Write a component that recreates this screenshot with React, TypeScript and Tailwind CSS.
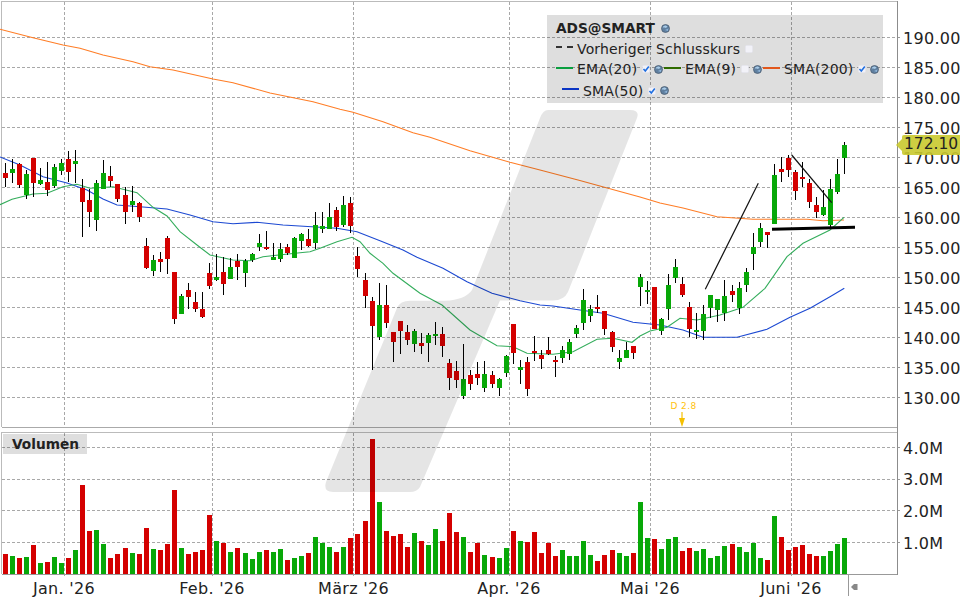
// ADS@SMART stock chart: candles, moving averages and volume
type Candle = [number, number, number, number, number, 'r' | 'g', number];

// coords read off the chart: x, wick top, wick bottom, body top, body bottom, colour, volume top (all 3x, per crop)
const partA: Candle[] = [
  [16, 128, 200, 158, 173, 'r', 387], [37, 117, 188, 146, 158, 'g', 393], [58, 128, 203, 131, 194, 'r', 399],
  [79, 150, 236, 162, 224, 'g', 396], [100, 113, 230, 113, 188, 'r', 360], [121, 143, 194, 180, 191, 'g', 414],
  [142, 126, 227, 186, 209, 'r', 411], [163, 131, 203, 141, 197, 'g', 396], [184, 117, 164, 129, 152, 'g', 414],
  [205, 93, 185, 117, 155, 'r', 399], [226, 90, 188, 123, 131, 'g', 375], [247, 177, 350, 204, 245, 'r', 180],
  [268, 207, 320, 240, 275, 'r', 318], [289, 180, 332, 189, 299, 'g', 315], [310, 120, 207, 159, 207, 'g', 357],
  [331, 138, 200, 168, 182, 'r', 399], [352, 192, 245, 192, 236, 'r', 387], [376, 200, 311, 225, 275, 'r', 369],
  [397, 198, 275, 243, 255, 'g', 384], [418, 245, 305, 249, 290, 'r', 387], [439, 353, 446, 378, 443, 'r', 309],
  [460, 405, 467, 420, 452, 'g', 372], [481, 396, 455, 417, 426, 'r', 375], [502, 349, 461, 353, 416, 'r', 357],
  [523, 456, 611, 456, 596, 'r', 195], [544, 522, 581, 528, 581, 'g', 369], [565, 489, 566, 510, 530, 'r', 387],
  [586, 516, 575, 546, 566, 'r', 381], [607, 516, 593, 567, 590, 'r', 375], [628, 429, 506, 459, 498, 'r', 270],
  [649, 402, 482, 471, 480, 'g', 348], [670, 411, 524, 456, 491, 'r', 354], [691, 414, 476, 441, 476, 'g', 381],
  [712, 402, 479, 423, 441, 'r', 369], [736, 417, 500, 423, 458, 'g', 384], [757, 399, 426, 402, 420, 'g', 402],
  [778, 342, 393, 369, 381, 'g', 381], [799, 333, 389, 381, 387, 'r', 375], [820, 369, 420, 411, 420, 'g', 381],
  [841, 369, 426, 387, 417, 'g', 372], [862, 372, 405, 381, 399, 'r', 405], [883, 351, 414, 354, 414, 'g', 399],
  [904, 339, 390, 342, 363, 'g', 393], [925, 327, 381, 357, 378, 'r', 384], [946, 276, 387, 315, 369, 'g', 336],
];

const partB: Candle[] = [
  [7, 96, 158, 138, 147, 'g', 354], [28, 69, 147, 111, 147, 'g', 366], [49, 82, 152, 90, 140, 'r', 381],
  [70, 48, 140, 75, 135, 'g', 366], [91, 51, 158, 69, 137, 'r', 339], [112, 201, 290, 228, 266, 'r', 327],
  [136, 279, 383, 300, 347, 'r', 288], [157, 351, 569, 363, 437, 'r', 42], [178, 309, 479, 375, 470, 'g', 231],
  [199, 315, 443, 375, 428, 'r', 318], [220, 456, 545, 456, 485, 'r', 333], [241, 423, 521, 423, 452, 'r', 327],
  [262, 435, 494, 456, 479, 'r', 366], [283, 447, 515, 453, 491, 'g', 324], [304, 459, 521, 489, 497, 'r', 348],
  [325, 459, 545, 465, 488, 'g', 360], [346, 426, 494, 462, 467, 'g', 312], [367, 441, 530, 462, 497, 'r', 348],
  [388, 537, 629, 549, 593, 'r', 264], [409, 543, 623, 573, 599, 'r', 321], [430, 491, 656, 597, 647, 'g', 336],
  [451, 570, 629, 585, 611, 'r', 381], [472, 545, 614, 582, 593, 'r', 354], [493, 543, 635, 582, 623, 'g', 390],
  [517, 573, 623, 585, 611, 'r', 396], [538, 594, 647, 597, 623, 'g', 399], [559, 524, 590, 528, 578, 'g', 369],
  [580, 432, 551, 432, 518, 'r', 318], [601, 540, 611, 561, 570, 'g', 348], [622, 530, 647, 546, 626, 'r', 351],
  [643, 468, 542, 513, 519, 'r', 321], [664, 510, 566, 525, 536, 'r', 384], [685, 471, 524, 510, 521, 'r', 354],
  [706, 528, 590, 540, 545, 'r', 393], [727, 498, 548, 510, 533, 'g', 375], [748, 477, 539, 486, 521, 'g', 393],
  [769, 435, 474, 444, 462, 'g', 393], [790, 327, 449, 360, 428, 'g', 348], [811, 375, 425, 387, 407, 'g', 390],
  [832, 345, 399, 381, 387, 'r', 408], [853, 393, 465, 393, 446, 'r', 390], [877, 453, 515, 456, 500, 'r', 375],
  [898, 510, 568, 534, 545, 'g', 384], [919, 485, 533, 510, 533, 'g', 393], [940, 498, 536, 498, 518, 'r', 384],
];

const partC: Candle[] = [
  [1, 462, 557, 471, 500, 'g', 231], [22, 483, 552, 510, 515, 'g', 339], [43, 501, 628, 501, 626, 'r', 342],
  [64, 594, 644, 597, 632, 'g', 372], [85, 462, 600, 495, 567, 'g', 342], [106, 417, 489, 441, 473, 'g', 336],
  [127, 471, 530, 492, 524, 'r', 378], [148, 546, 650, 561, 626, 'r', 369], [169, 579, 656, 630, 635, 'g', 378],
  [190, 555, 660, 582, 632, 'g', 372], [211, 525, 594, 525, 564, 'g', 399], [232, 537, 605, 537, 570, 'g', 393],
  [253, 480, 603, 528, 579, 'g', 363], [277, 495, 546, 513, 525, 'r', 357], [298, 486, 582, 504, 564, 'g', 366],
  [319, 444, 516, 456, 495, 'g', 381], [340, 339, 450, 381, 402, 'g', 354], [361, 309, 381, 324, 366, 'g', 399],
  [382, 336, 384, 336, 345, 'r', 405], [403, 132, 312, 165, 312, 'g', 273], [424, 111, 186, 147, 156, 'r', 336],
  [445, 105, 171, 114, 150, 'r', 375], [466, 150, 240, 156, 213, 'r', 366], [487, 126, 201, 171, 177, 'r', 360],
  [508, 177, 264, 189, 246, 'r', 387], [529, 231, 294, 255, 276, 'r', 393], [550, 210, 288, 261, 285, 'g', 393],
  [571, 177, 321, 207, 315, 'g', 378], [592, 117, 222, 162, 216, 'g', 357], [613, 66, 162, 75, 114, 'g', 339],
];

const candles = [
  ...partA.map((c) => ({ c, ox: 0, oy: 120 })),
  ...partB.map((c) => ({ c, ox: 320, oy: 180 })),
  ...partC.map((c) => ({ c, ox: 640, oy: 120 })),
].map(({ c, ox, oy }) => ({
  x: Math.floor(ox + c[0] / 3),
  wickTop: Math.round(oy + c[1] / 3),
  wickBot: Math.round(oy + c[2] / 3),
  bodyTop: Math.round(oy + c[3] / 3),
  bodyBot: Math.round(oy + c[4] / 3),
  fill: c[5] === 'r' ? '#d40000' : '#08a808',
  volTop: Math.round(425 + c[6] / 3),
}));

const sma200 = '0,29.3 33,37.7 63,45 80,48.3 103,55 133,61.7 150,66.7 173,70 213,79 233,82.7 270,93 313,101.7 340,109.3 353,112.3 383,121.7 413,132.7 430,137.3 470,150.7 510,162.3 540,170 578,180 640,197 660,203 683,208 717,216.7 753,219.3 807,219.3 823,220.7 844,220';
const sma50 = '0,157 20,165 43,176.7 67,183 87,190 103,199 117,205 140,206.7 167,209 190,215 213,221.7 233,223.7 257,222.3 283,225 320,227.3 337,228.3 357,231.7 380,240.7 403,250 417,257.3 443,268.3 467,281.7 492,293.3 520,300.7 540,305 553,306 580,310 603,313.3 633,322.3 660,325 683,330 703,337.3 737,337.3 767,329.3 790,317.3 810,308.3 830,296.7 844.3,288.3';
const ema20 = '0,204.7 12,199.3 33,194 47,193.3 63,186.7 77,184.3 90,188.3 113,186.7 137,192.7 153,207.3 167,216 180,231.7 197,245 210,255 233,260 250,260.7 263,256.7 300,252.7 310,251.7 320,248.3 337,241.7 352,237.3 360,241.7 370,253.3 383,263.3 393,273.3 420,293.3 442,305 470,330 497,345.7 513,346.7 527,353.3 553,354.3 573,351.7 597,339.3 613,338.3 632,342.3 640,336 650,331 667,327.3 680,318.3 697,320 720,315 743,307.3 765,288.3 787,256.7 803,243.3 830,230 844,217.3';

const priceRows = [37, 67, 97, 127, 157, 187, 217, 247, 277, 307, 337, 367, 397];
const volRows = [447, 479, 510, 542];
const months = [64, 212, 353, 509, 650, 791];
const prices = ['190.00', '185.00', '180.00', '175.00', '170.00', '165.00', '160.00', '155.00', '150.00', '145.00', '140.00', '135.00', '130.00'];

const Globe = () => (
  <svg width="9" height="9" viewBox="0 0 9 9" className="shrink-0">
    <circle cx="4.5" cy="4.5" r="4" fill="#5f7f9f" />
    <path d="M1.5 3.5 C3 1 5 1 6.5 2.5 L5 4 L3.5 3.5 Z" fill="#a9cbe8" />
    <path d="M4 6 L7.5 4.5 L7 7 Z" fill="#8fb6dc" />
    <circle cx="4.5" cy="4.5" r="4" fill="none" stroke="#46586c" strokeWidth="0.7" />
  </svg>
);

const CheckBox = ({ checked }: { checked: boolean }) => (
  <svg width="8" height="8" viewBox="0 0 8 8" className="shrink-0">
    <rect x="0.5" y="0.5" width="7" height="7" rx="1" fill="#f2f2f8" stroke="#e4e4ee" strokeWidth="0.6" />
    {checked && <path d="M1.5 4 L3.3 6 L6.8 1.6" fill="none" stroke="#1f6fe0" strokeWidth="1.6" />}
  </svg>
);

const LegendItem = ({ label, line, checked, width }: { label: string; line: string; checked: boolean; width: string }) => (
  <div className={`flex items-center ${width}`}>
    <span className={`block w-[17px] h-[2px] mb-[3px] shrink-0 ${line}`} />
    <span className="ml-[4px] whitespace-nowrap">{label}</span>
    <span className="ml-[5px] flex"><CheckBox checked={checked} /></span>
    <span className="ml-[4px] flex"><Globe /></span>
  </div>
);

const Chart = () => (
  <svg width="900" height="578" viewBox="0 0 900 578" className="block">
    {/* grid */}
    <g stroke="#a8a8a8" strokeWidth="1" strokeDasharray="3 2" shapeRendering="crispEdges">
      {priceRows.concat(volRows).map((y) => <line key={y} x1="2" x2="897" y1={y + 0.5} y2={y + 0.5} />)}
      {months.map((x) => <line key={x} x1={x + 0.5} x2={x + 0.5} y1="2" y2="427" />)}
      {months.map((x) => <line key={x} x1={x + 0.5} x2={x + 0.5} y1="433" y2="578" />)}
    </g>
    <g stroke="#999" strokeWidth="1" shapeRendering="crispEdges">
      {priceRows.concat(volRows).map((y) => <line key={y} x1="897" x2="900" y1={y + 0.5} y2={y + 0.5} />)}
      <line x1="848.5" x2="848.5" y1="574" y2="578" />
    </g>
    {/* panel frames */}
    <g fill="none" shapeRendering="crispEdges">
      <path d="M1.5 427 V1.5 H897" stroke="#bbb" />
      <path d="M1.5 574 V432.5 H897" stroke="#bbb" />
      <path d="M1.5 427.5 H897" stroke="#aaa" />
      <path d="M1.5 574.5 H897.5" stroke="#999" />
      <path d="M897.5 1 V575" stroke="#8c8c8c" />
    </g>
    {/* volume */}
    <g shapeRendering="crispEdges">
      {candles.map((k) => <rect key={k.x} x={k.x - 2} y={k.volTop} width="5" height={574 - k.volTop} fill={k.fill} />)}
    </g>
    {/* moving averages */}
    <polyline points={sma200} fill="none" stroke="#ff7d26" strokeWidth="1.1" />
    <polyline points={sma50} fill="none" stroke="#1c49d2" strokeWidth="1.1" />
    <polyline points={ema20} fill="none" stroke="#34ad5c" strokeWidth="1.1" />
    {/* candles */}
    <g shapeRendering="crispEdges">
      {candles.map((k) => (
        <g key={k.x}>
          <rect x={k.x} y={k.wickTop} width="1" height={k.wickBot - k.wickTop} fill="#000" />
          <rect x={k.x - 2} y={k.bodyTop} width="5" height={Math.max(k.bodyBot - k.bodyTop, 2)} fill={k.fill} />
        </g>
      ))}
    </g>
    {/* drawn trend lines */}
    <line x1="705.3" y1="289.3" x2="758.3" y2="183.3" stroke="#111" strokeWidth="1.2" />
    <line x1="791.7" y1="155" x2="831.7" y2="202.7" stroke="#111" strokeWidth="1.2" />
    <line x1="772" y1="229.3" x2="855" y2="227.3" stroke="#000" strokeWidth="3" />
    {/* dividend marker */}
    <text x="670.5" y="408.5" fontSize="9" fill="#ffc20e" letterSpacing="0.4">D 2.8</text>
    <line x1="682" y1="412" x2="682" y2="420" stroke="#f5c000" strokeWidth="1.2" />
    <path d="M679 418 H685 L682 427 Z" fill="#f5c000" />
    {/* watermark */}
    <path
      d="M548 110 H630 Q640 110 637 118 L568 292 Q564 300.5 553 300.5 H500 L420 487 Q417 492 410 492 H333 Q323 492 326 482 L397 308 Q400 300.7 410 300.7 H445 Q465 300 472 290 L540 118 Q543 110 548 110 Z"
      fill="#000"
      fillOpacity="0.1"
    />
  </svg>
);

const App = () => {
  return (
    <div className="w-[960px] h-[600px] bg-white overflow-hidden text-[#222] font-['DejaVu_Sans','Liberation_Sans',sans-serif]">
      <div className="flex h-[578px]">
        <div className="relative w-[900px]">
          <Chart />

          <div className="absolute left-[547px] top-[15px] w-[336px] h-[88px] bg-black/[0.13] pl-[9px] text-[14px] tracking-[0.15px] leading-none">
            <div className="flex items-center h-[21px] mt-[3px] font-bold text-[13.7px] tracking-normal">
              <span>ADS@SMART</span>
              <span className="ml-[6px] flex"><Globe /></span>
            </div>
            <div className="flex items-center h-[19px]">
              <span className="w-[17px] h-[2px] mb-[3px] border-t-2 border-dashed border-[#333]" />
              <span className="ml-[4px] whitespace-nowrap">Vorheriger Schlusskurs</span>
              <span className="ml-[5px] flex"><CheckBox checked={false} /></span>
            </div>
            <div className="flex items-center h-[22px]">
              <LegendItem label="EMA(20)" line="bg-[#0a9f3f]" checked width="w-[108px]" />
              <LegendItem label="EMA(9)" line="bg-[#2f6b00]" checked={false} width="w-[99px]" />
              <LegendItem label="SMA(200)" line="bg-[#e2571c]" checked width="w-[120px]" />
            </div>
            <div className="flex items-center h-[21px] pl-[6px]">
              <LegendItem label="SMA(50)" line="bg-[#0b35c4]" checked width="w-[108px]" />
            </div>
          </div>

          <div className="absolute left-[3px] top-[434px] w-[84px] h-[20px] bg-black/[0.13] pl-[9px] flex items-center font-bold text-[13.7px]">
            Volumen
          </div>
        </div>

        <div className="relative w-[60px] pt-[24px] pl-[3px] text-[16px] tracking-[0.3px] leading-none">
          {prices.map((p) => (
            <div key={p} className="h-[30px] flex items-center">{p}</div>
          ))}
          <div className="mt-[19px]">
            {['4.0M', '3.0M', '2.0M', '1.0M'].map((v) => (
              <div key={v} className="h-[31.67px] flex items-center">{v}</div>
            ))}
          </div>

          <div className="absolute left-[-4px] top-[135px] flex items-center text-[15.5px] tracking-normal">
            <span className="w-0 h-0 border-y-[6px] border-r-[6px] border-y-transparent border-r-[#c9c92e]/90" />
            <span className="w-[58px] h-[20px] pl-[2px] flex items-center rounded-l-[2px] bg-[#c9c92e]/90">172.10</span>
          </div>
        </div>
      </div>

      <div className="flex h-[22px] text-[16px] tracking-[0.3px] leading-none">
        <div className="w-[128px] h-[22px] flex items-center justify-center whitespace-nowrap">Jan. '26</div>
        <div className="ml-[41px] w-[86px] h-[22px] flex items-center justify-center whitespace-nowrap">Feb. '26</div>
        <div className="w-[197px] h-[22px] flex items-center justify-center whitespace-nowrap">März '26</div>
        <div className="w-[114px] h-[22px] flex items-center justify-center whitespace-nowrap">Apr. '26</div>
        <div className="w-[168px] h-[22px] flex items-center justify-center whitespace-nowrap">Mai '26</div>
        <div className="w-[114px] h-[22px] flex items-center justify-center whitespace-nowrap">Juni '26</div>
        <div className="h-[18px] border-l border-[#999] pl-[2px] flex items-center">
          <svg width="8" height="8" viewBox="0 0 8 8">
            <path d="M0 4 L3 1 H6.5 V7 H3 Z" fill="#888" />
          </svg>
        </div>
      </div>
    </div>
  );
};

export default App;
